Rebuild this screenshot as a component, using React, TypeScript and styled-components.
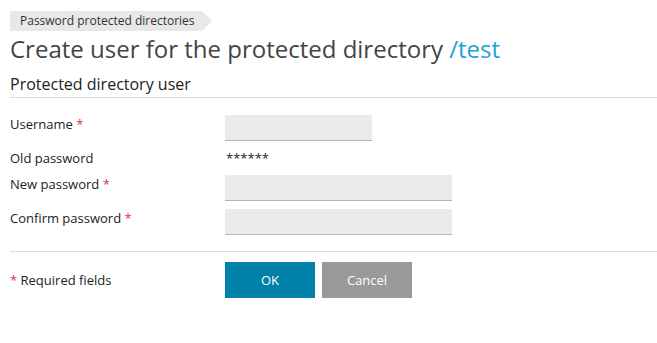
import styled, { createGlobalStyle } from 'styled-components';

const GlobalStyle = createGlobalStyle`
  body {
    margin: 0;
    background: #fff;
    font-family: 'Open Sans', 'Liberation Sans', sans-serif;
    color: #333;
  }
`;

const Page = styled.div`
  padding: 8px 0 0 10px;
`;

const Breadcrumb = styled.div`
  position: relative;
  display: inline-flex;
  align-items: center;
  height: 20px;
  padding: 0 7px 0 10px;
  background: #e8e8e8;
  font-size: 12px;
  color: #333;

  &::after {
    content: '';
    position: absolute;
    right: -10px;
    top: 0;
    border-left: 10px solid #e8e8e8;
    border-top: 10px solid transparent;
    border-bottom: 10px solid transparent;
  }
`;

const Title = styled.h1`
  margin: 1px 0 0;
  font-size: 24px;
  font-weight: 400;
  line-height: 34px;
  color: #444;
`;

const Accent = styled.span`
  color: #1ba2d8;
`;

const SectionTitle = styled.h2`
  margin: 7px 0 0;
  font-size: 16px;
  font-weight: 400;
  line-height: 22px;
  padding-bottom: 2px;
  border-bottom: 1px solid #ddd;
  color: #222;
`;

const Form = styled.div`
  display: grid;
  grid-template-columns: 215px 1fr;
  row-gap: 8px;
  padding-top: 17px;
  padding-bottom: 16px;
  border-bottom: 1px solid #ddd;
  align-items: center;
`;

const Label = styled.label`
  font-size: 13px;
  color: #222;
  align-self: start;
  line-height: 18px;
`;

const Star = styled.span`
  color: #d9304f;
`;

const Input = styled.input<{ $width: number }>`
  box-sizing: border-box;
  width: ${(p) => p.$width}px;
  height: 26px;
  border: none;
  border-bottom: 1px solid #a9b8bb;
  background: #ebebeb;
  font-family: inherit;
  font-size: 13px;
  padding: 0 8px;
  outline: none;
`;

const Masked = styled.div`
  font-size: 13px;
  color: #222;
  padding-left: 1px;
  line-height: 18px;
`;

const Footer = styled.div`
  display: grid;
  grid-template-columns: 215px 1fr;
  align-items: center;
  padding-top: 10px;
`;

const Note = styled.div`
  font-size: 13px;
  color: #222;
`;

const Buttons = styled.div`
  display: flex;
  gap: 7px;
`;

const Button = styled.button<{ $primary?: boolean }>`
  width: 90px;
  height: 36px;
  border: none;
  background: ${(p) => (p.$primary ? '#0081aa' : '#999999')};
  color: #fff;
  font-family: inherit;
  font-size: 13px;
  cursor: pointer;
`;

export default function App() {
  return (
    <Page>
      <GlobalStyle />
      <Breadcrumb>Password protected directories</Breadcrumb>
      <Title>
        Create user for the protected directory <Accent>/test</Accent>
      </Title>
      <SectionTitle>Protected directory user</SectionTitle>
      <Form>
        <Label>
          Username <Star>*</Star>
        </Label>
        <Input $width={147} />
        <Label>Old password</Label>
        <Masked>******</Masked>
        <Label>
          New password <Star>*</Star>
        </Label>
        <Input type="password" $width={227} />
        <Label>
          Confirm password <Star>*</Star>
        </Label>
        <Input type="password" $width={227} />
      </Form>
      <Footer>
        <Note>
          <Star>*</Star> Required fields
        </Note>
        <Buttons>
          <Button $primary>OK</Button>
          <Button>Cancel</Button>
        </Buttons>
      </Footer>
    </Page>
  );
}
